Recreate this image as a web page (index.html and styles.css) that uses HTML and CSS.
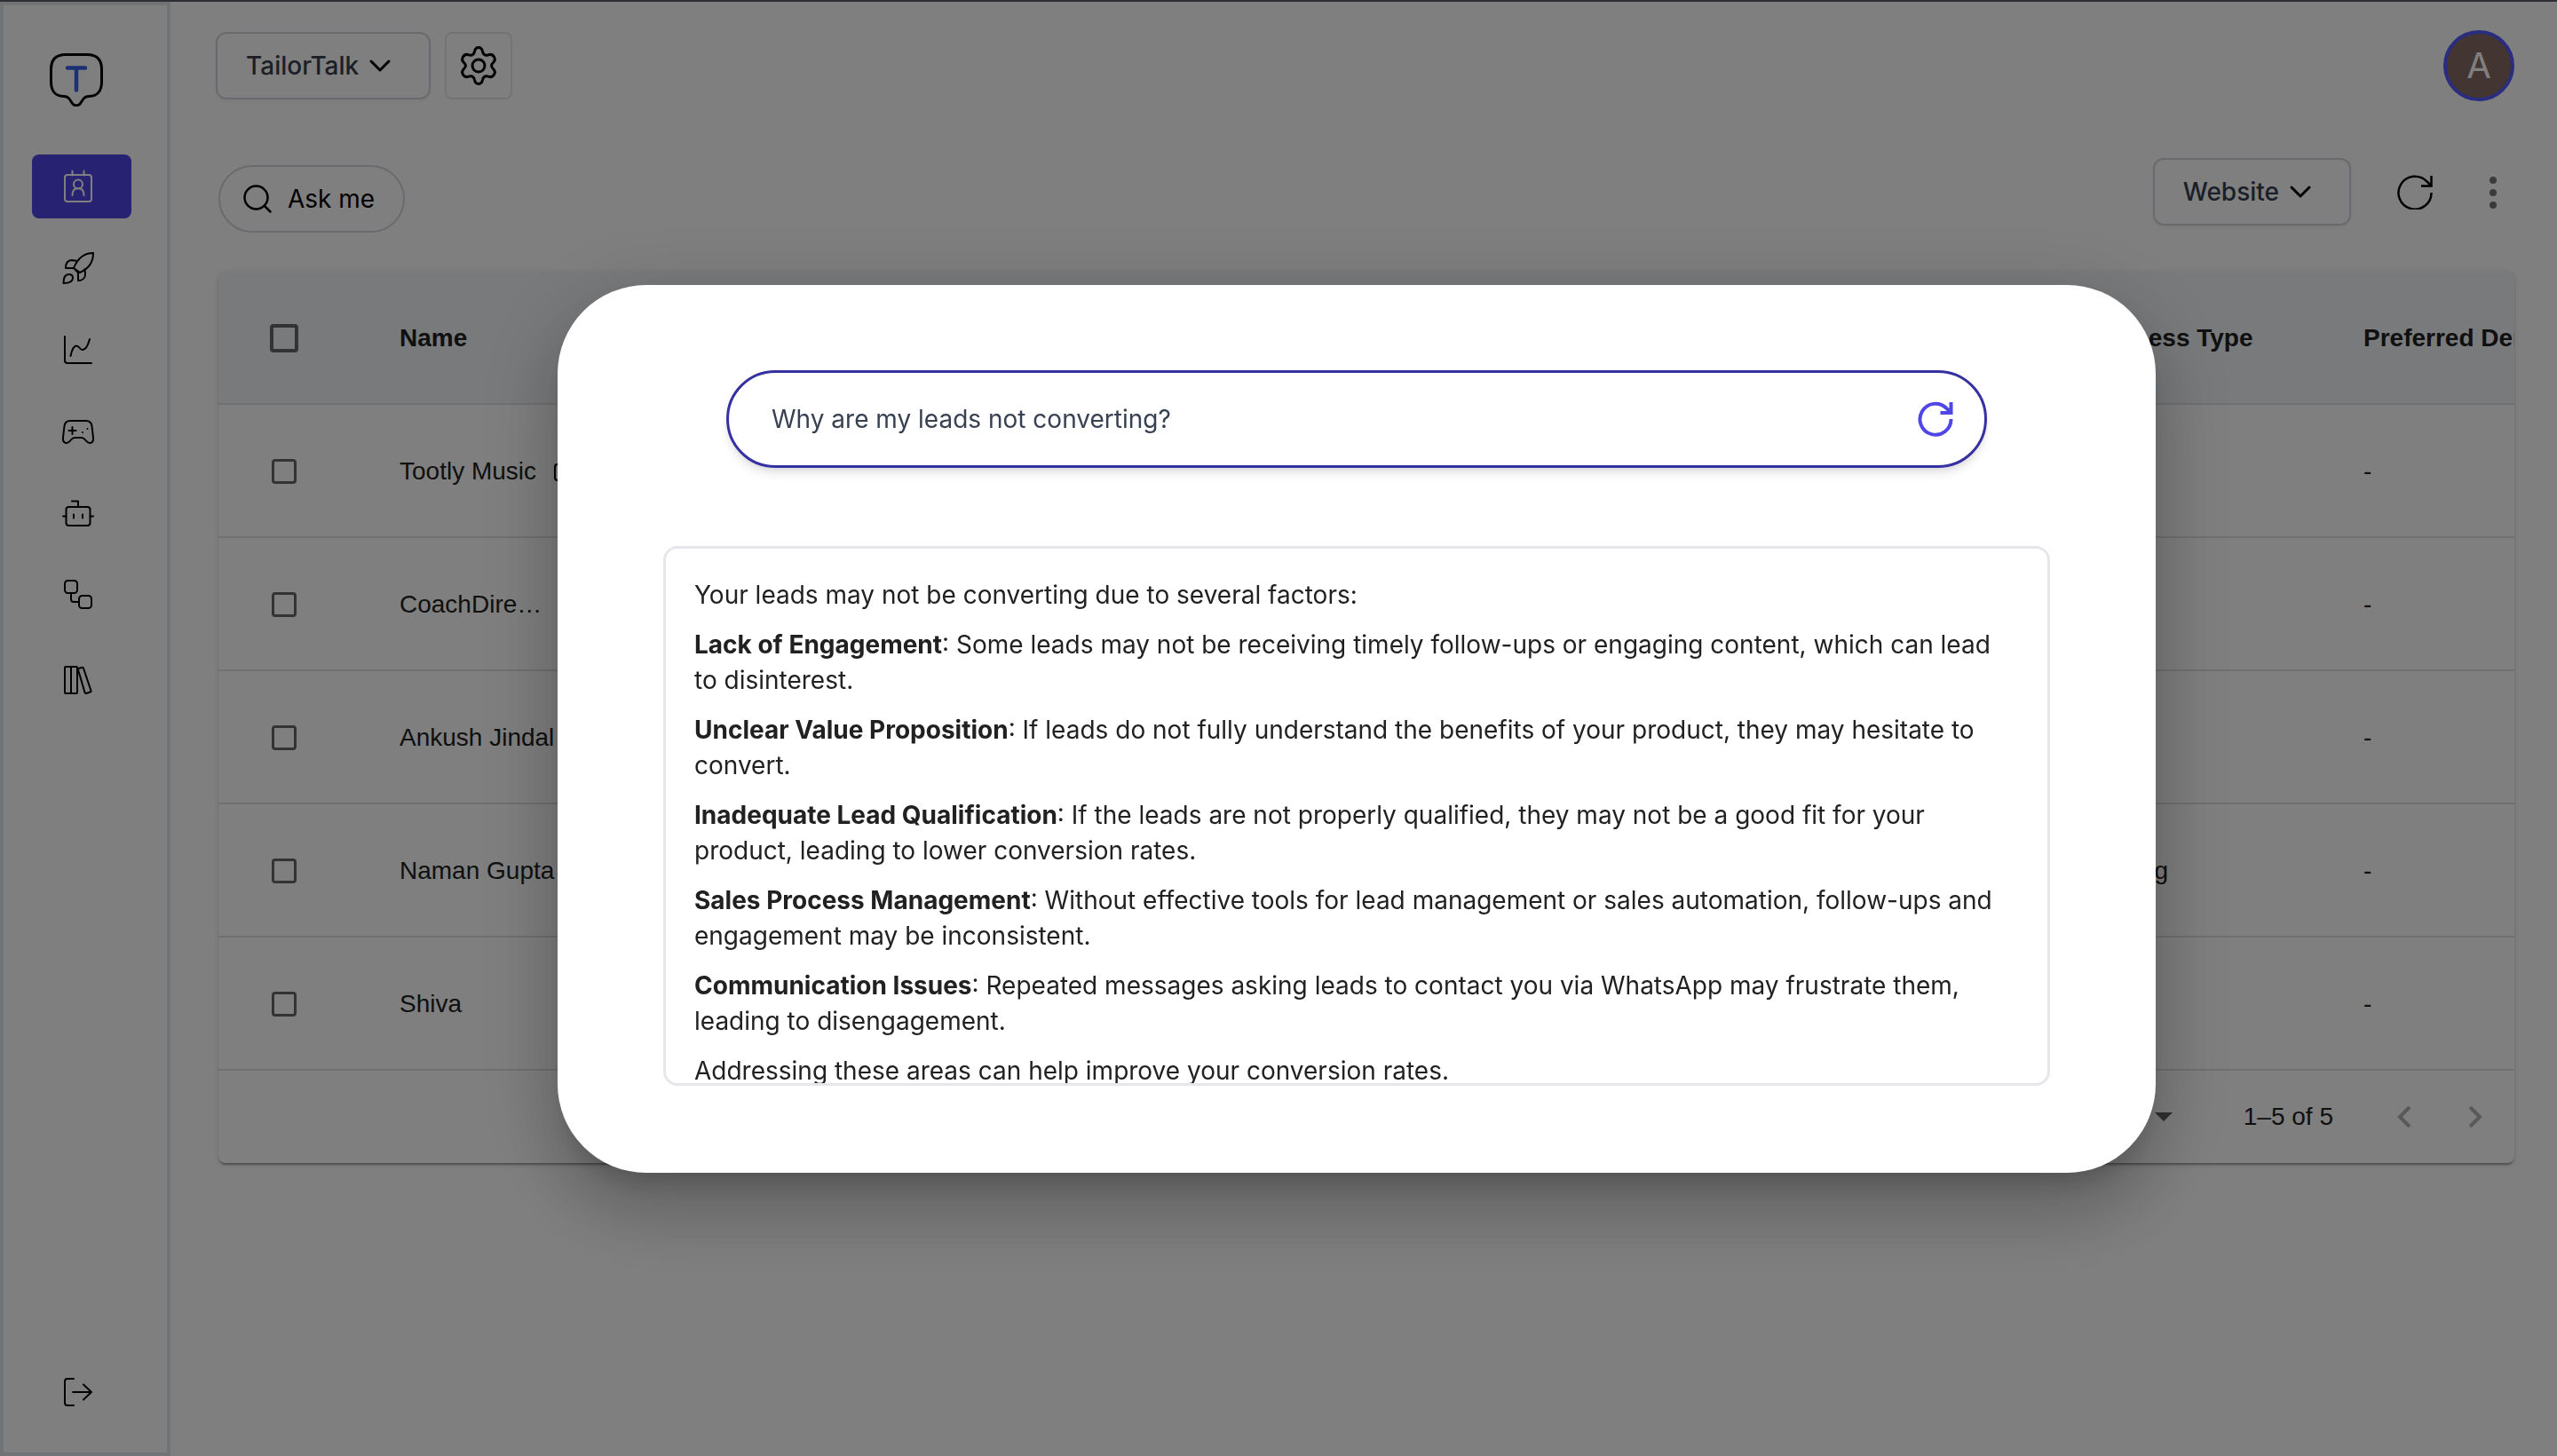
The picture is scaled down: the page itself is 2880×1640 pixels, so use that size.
FILE: index.html
```html
<!DOCTYPE html>
<html lang="en">
<head>
<meta charset="utf-8">
<title>TailorTalk</title>
<link rel="stylesheet" href="styles.css">
</head>
<body>
<div class="app">
  <aside class="sidebar">
    <a class="logo" href="#" aria-label="TailorTalk">
      <svg width="60" height="60" viewBox="0 0 60 60" fill="none" stroke-linecap="round" stroke-linejoin="round"><path d="M18 1.5h24c11 0 16.500 5.500 16.500 16.500v14c0 11-5.500 16.500-14 16.500c-4 0-5.500 1-7 3.500l-3 4.500c-2 3-7 3-9 0l-3-4.500c-1.500-2.500-3-3.500-7-3.500C7 48.500 1.500 43 1.500 32V18C1.500 7 7 1.500 18 1.500z" stroke="#000" stroke-width="3"/><path d="M20 16.500h20M30 16.500v25" stroke="#3563e9" stroke-width="4.500"/></svg>
    </a>
    <nav class="nav">
      <a class="nav-item active" href="#" aria-label="Leads"><svg class="icon" viewBox="0 0 40 40"><rect x="5" y="7" width="30" height="30" rx="3"/><path d="M13.500 2.500v5M26.500 2.500v5M13.500 30c0-5 2.500-8 6.500-8s6.500 3 6.500 8"/><circle cx="20" cy="17.500" r="5"/></svg></a>
      <a class="nav-item" href="#" aria-label="Campaigns"><svg class="icon" viewBox="0 0 40 40"><path d="M15 20C19 10 25 3 37 3c0 11-6 18-15 22zM15 20l5 5M15 20H6c0-5 2-9 7-9l6 1M20 25v9c5 0 8-3 8-7l-.500-6M3.500 37c0-6 2-10 6-10c3 0 4.500 1.500 4.500 4c0 4-4.500 6-10.500 6z"/></svg></a>
      <a class="nav-item" href="#" aria-label="Analytics"><svg class="icon" viewBox="0 0 40 40"><path d="M5 5v27c0 2 1 3 3 3h27M11.500 27C13 20 15 15.500 18 15.500c3.500 0 3.500 4.500 7 4.500c4 0 6-4.500 8-12"/></svg></a>
      <a class="nav-item" href="#" aria-label="Playground"><svg class="icon" viewBox="0 0 40 40"><path d="M11 8h18c4 0 6 2 6.500 6L37 27c.500 7-5 7.500-8 3.500C27.500 28.500 26.500 27 24 27h-8c-2.500 0-3.500 1.500-5 3.500C8 34.500 2.500 34 3 27l1.500-13C5 10 7 8 11 8zM13.500 15v8M9.500 19h8M25 21v.010M30.500 17v.010"/></svg></a>
      <a class="nav-item" href="#" aria-label="Agents"><svg class="icon" viewBox="0 0 40 40"><rect x="6.500" y="13" width="27" height="21" rx="3"/><path d="M13 6.500h7V13M3 23.500h3.500M33.500 23.500H37M15 21.500v4M25 21.500v4"/></svg></a>
      <a class="nav-item" href="#" aria-label="Workflows"><svg class="icon" viewBox="0 0 40 40"><rect x="5" y="4" width="14" height="14" rx="3.500"/><rect x="21" y="21" width="14" height="14" rx="3.500"/><path d="M12 18v7c0 2 1 3 3 3h6"/></svg></a>
      <a class="nav-item library" href="#" aria-label="Library"><svg class="icon" viewBox="0 0 40 40"><rect x="5" y="5" width="7" height="30" rx="1"/><rect x="12" y="5" width="7" height="30" rx="1"/><path d="M20.500 7l4-1.200q1.200-.300 1.500.900l8.500 25.300q.300 1.200-.900 1.500l-4.500 1.500q-1.200.300-1.500-.900L20 8.500q-.300-1.200.500-1.500z"/></svg></a>
    </nav>
    <button class="nav-item logout" type="button" aria-label="Log out"><svg class="icon" viewBox="0 0 40 40"><path d="M15 5H8Q5 5 5 8v24q0 3 3 3h7M14 20h21M26 11.500l9 8.500l-9 8.500"/></svg></button>
  </aside>

  <main class="main">
    <header class="topbar">
      <button class="select-btn" type="button">TailorTalk <svg class="chevron" viewBox="0 0 24 16"><path d="M2 3l10 10L22 3"/></svg></button>
      <button class="gear-btn" type="button" aria-label="Settings"><svg width="48" height="48" viewBox="0 0 48 48" fill="none" stroke="#000" stroke-width="3"><circle cx="24" cy="24" r="7"/><path d="M24 3.500c3 0 4 2 4.500 4.500c.500 3.500 3 5 6.500 3.800c3-1 5-.300 6.500 2.200s1 4.500-1 6.500c-2.500 2.300-2.500 4.700 0 7c2 2 2.500 4 1 6.500s-3.500 3.200-6.500 2.200c-3.500-1.200-6 .300-6.500 3.800c-.500 2.500-1.500 4.500-4.500 4.500s-4-2-4.500-4.500c-.500-3.500-3-5-6.500-3.800c-3 1-5 .300-6.500-2.200s-1-4.500 1-6.500c2.500-2.300 2.500-4.700 0-7c-2-2-2.500-4-1-6.500s3.500-3.200 6.500-2.200c3.500 1.200 6-.300 6.500-3.800C20 5.500 21 3.500 24 3.500z"/></svg></button>
      <span class="avatar">A</span>
    </header>

    <div class="toolbar">
      <button class="ask-btn" type="button"><svg width="32" height="32" viewBox="0 0 32 32" fill="none" stroke="#000" stroke-width="2.500" stroke-linecap="round"><circle cx="14.500" cy="14.500" r="13"/><path d="M24 24l6.500 6.500"/></svg>Ask me</button>
      <div class="tools">
        <button class="select-btn" type="button">Website <svg class="chevron" viewBox="0 0 24 16"><path d="M2 3l10 10L22 3"/></svg></button>
        <button class="icon-btn" type="button" aria-label="Refresh"><svg width="40" height="40" viewBox="0 0 40 40" fill="none" stroke="#000" stroke-width="2.500"><path d="M38.500 21A18.500 18.500 0 1 1 33.500 8.500l5 5M38.500 2v11.500H27"/></svg></button>
        <button class="icon-btn dots" type="button" aria-label="More"><svg width="8" height="38" viewBox="0 0 8 38"><circle cx="4" cy="6" r="4"/><circle cx="4" cy="20" r="4"/><circle cx="4" cy="34" r="4"/></svg></button>
      </div>
    </div>

    <section class="card">
      <table class="leads">
        <colgroup><col class="c-check"><col class="c-name"><col class="c-mid"><col class="c-type"><col class="c-date"></colgroup>
        <thead>
          <tr><th><input type="checkbox" aria-label="Select all"></th><th>Name</th><th></th><th>Business Type</th><th>Preferred Demo</th></tr>
        </thead>
        <tbody>
          <tr><td><input type="checkbox" aria-label="Select Tootly Music"></td><td><span class="name">Tootly Music <svg width="24" height="24" viewBox="0 0 24 24" fill="none" stroke="#000" stroke-width="2"><rect x="1" y="4" width="18" height="18" rx="3"/></svg></span></td><td></td><td>-</td><td>-</td></tr>
          <tr><td><input type="checkbox" aria-label="Select CoachDire…"></td><td>CoachDire…</td><td></td><td>-</td><td>-</td></tr>
          <tr><td><input type="checkbox" aria-label="Select Ankush Jindal"></td><td>Ankush Jindal</td><td></td><td>-</td><td>-</td></tr>
          <tr><td><input type="checkbox" aria-label="Select Naman Gupta"></td><td>Naman Gupta</td><td></td><td>Training</td><td>-</td></tr>
          <tr><td><input type="checkbox" aria-label="Select Shiva"></td><td>Shiva</td><td></td><td>-</td><td>-</td></tr>
        </tbody>
      </table>
      <footer class="pager">
        <svg class="caret" width="20" height="10" viewBox="0 0 20 10"><path d="M0 0h20L10 10z"/></svg>
        <span>1–5 of 5</span>
        <span class="pager-nav">
          <button class="page-btn" type="button" aria-label="Previous page"><svg width="16" height="24" viewBox="0 0 16 24"><path d="M14 1L3 12l11 11"/></svg></button>
          <button class="page-btn" type="button" aria-label="Next page"><svg width="16" height="24" viewBox="0 0 16 24"><path d="M2 1l11 11L2 23"/></svg></button>
        </span>
      </footer>
    </section>
  </main>
</div>

<div class="overlay">
  <div class="modal" role="dialog" aria-modal="true" aria-label="Ask me">
    <form class="ask">
      <input class="ask-input" type="text" aria-label="Question" value="Why are my leads not converting?">
      <button class="icon-btn" type="button" aria-label="Ask again"><svg width="40" height="40" viewBox="0 0 40 40" fill="none" stroke="#4f46e5" stroke-width="4"><path d="M37.500 20A17.500 17.500 0 1 1 32.500 8l5 4.500M37.500 1v12H25.500"/></svg></button>
    </form>
    <div class="answer">
      <p>Your leads may not be converting due to several factors:</p>
      <p><strong>Lack of Engagement</strong>: Some leads may not be receiving timely follow-ups or engaging content, which can lead to disinterest.</p>
      <p><strong>Unclear Value Proposition</strong>: If leads do not fully understand the benefits of your product, they may hesitate to convert.</p>
      <p><strong>Inadequate Lead Qualification</strong>: If the leads are not properly qualified, they may not be a good fit for your product, leading to lower conversion rates.</p>
      <p><strong>Sales Process Management</strong>: Without effective tools for lead management or sales automation, follow-ups and engagement may be inconsistent.</p>
      <p><strong>Communication Issues</strong>: Repeated messages asking leads to contact you via WhatsApp may frustrate them, leading to disengagement.</p>
      <p>Addressing these areas can help improve your conversion rates.</p>
    </div>
  </div>
</div>
</body>
</html>
```
FILE: styles.css
```css
* { box-sizing: border-box; }
body {
  margin: 0;
  border-top: 2px solid #5e5e66;
  background: #fff;
  color: #212121;
  font: 28px/40px Inter, sans-serif;
  overflow: hidden;
}
button, input { font: inherit; color: inherit; margin: 0; }
button { background: none; border: 0; padding: 0; }
svg { display: block; flex: none; }

.app { display: flex; min-height: calc(100vh - 2px); }

/* Sidebar */
.sidebar {
  flex: none;
  display: flex;
  flex-direction: column;
  width: 192px;
  padding: 54px 0 32px 32px;
  border: 4px solid #e5e7eb;
}
.logo { margin-left: 20px; }
.nav { display: flex; flex-direction: column; gap: 20px; margin-top: 54px; }
.nav-item {
  display: flex;
  align-items: center;
  justify-content: center;
  width: 112px;
  height: 72px;
  padding-right: 8px;
  border-radius: 8px;
}
.nav-item.active { background: #4f46e5; }
.nav-item.library { margin-top: 4px; }
.logout { margin-top: auto; }
.icon {
  width: 40px;
  height: 40px;
  fill: none;
  stroke: #000;
  stroke-width: 2;
  stroke-linecap: round;
  stroke-linejoin: round;
}
.active .icon { stroke: #fff; }

/* Main column */
.main { flex: 1; min-width: 0; padding: 32px 48px 0 51px; }
.topbar { display: flex; align-items: center; gap: 16px; height: 80px; }
.select-btn {
  display: flex;
  align-items: center;
  gap: 12px;
  height: 76px;
  padding: 0 43px 0 32px;
  border: 2px solid #d1d5db;
  border-radius: 12px;
  box-shadow: 0 2px 4px rgba(0, 0, 0, .05);
  color: #374151;
  font-weight: 500;
}
.chevron { width: 24px; height: 16px; fill: none; stroke: #000; stroke-width: 3; stroke-linecap: round; stroke-linejoin: round; }
.gear-btn {
  display: flex;
  align-items: center;
  justify-content: center;
  width: 76px;
  height: 76px;
  border: 2px solid #e5e7eb;
  border-radius: 8px;
}
.avatar {
  width: 80px;
  height: 80px;
  margin-left: auto;
  border: 4px solid #5558ff;
  border-radius: 50%;
  background: #876b62;
  color: #fff;
  font-size: 40px;
  line-height: 72px;
  text-align: center;
}
.toolbar { display: flex; justify-content: space-between; align-items: flex-end; height: 148px; }
.ask-btn {
  display: flex;
  align-items: center;
  gap: 18px;
  height: 76px;
  margin-left: 3px;
  padding: 0 32px 0 26px;
  border: 2px solid #d1d5db;
  border-radius: 38px;
  color: #000;
}
.tools { display: flex; align-items: center; margin-bottom: 8px; }
.tools .icon-btn { margin-left: 52px; }
.tools .dots { margin: 0 20px 0 64px; fill: #757575; }

/* Leads table */
.card {
  margin: 43px 0 0 3px;
  border-radius: 8px;
  overflow: hidden;
  box-shadow: 0 4px 2px -2px rgba(0, 0, 0, .2), 0 2px 2px rgba(0, 0, 0, .14), 0 2px 6px rgba(0, 0, 0, .12);
  color: #212121;
  font-family: "Liberation Sans", Arial, sans-serif;
}
.leads { width: 100%; border-collapse: separate; border-spacing: 0; table-layout: fixed; }
.c-check { width: 172px; }
.c-name { width: 260px; }
.c-type { width: 320px; }
.c-date { width: 202px; }
th, td {
  height: 150px;
  padding: 2px 0 0 32px;
  border-bottom: 2px solid #e0e0e0;
  text-align: left;
  white-space: nowrap;
}
th { height: 151px; background: #f3f5f8; }
th:first-child, td:first-child { padding-left: 60px; }
input[type="checkbox"] {
  appearance: none;
  display: block;
  width: 28px;
  height: 28px;
  border: 3px solid #666;
  border-radius: 4px;
}
th input[type="checkbox"] { width: 32px; height: 32px; margin-left: -2px; border-width: 4px; }
.name { display: flex; align-items: center; gap: 20px; }
.pager { display: flex; align-items: center; justify-content: flex-end; height: 104px; padding-right: 36px; }
.pager .caret { margin-right: 80px; fill: #616161; }
.pager-nav { display: flex; gap: 64px; margin-left: 72px; }
.page-btn svg { fill: none; stroke: #b3b3b3; stroke-width: 4; }

/* Dialog */
.overlay {
  position: fixed;
  inset: 0;
  display: flex;
  align-items: center;
  justify-content: center;
  padding: 2px 0 0 176px;
  background: rgba(0, 0, 0, .5);
}
.modal {
  width: 1800px;
  max-width: 92%;
  padding: 96px 119px 98px;
  border-radius: 100px;
  background: #fff;
  box-shadow: 0 22px 30px -14px rgba(0, 0, 0, .2), 0 48px 76px 6px rgba(0, 0, 0, .14), 0 18px 92px 16px rgba(0, 0, 0, .12);
}
.ask {
  display: flex;
  align-items: center;
  height: 110px;
  margin: 0 71px 88px;
  padding: 0 35px 0 48px;
  border: 3px solid #3730a3;
  border-radius: 55px;
  box-shadow: 0 8px 12px -2px rgba(0, 0, 0, .1), 0 4px 8px -4px rgba(0, 0, 0, .1);
}
.ask-input { flex: 1; min-width: 0; padding: 0; border: 0; outline: 0; background: none; color: #374151; }
.answer {
  height: 608px;
  padding: 32px;
  border: 3px solid #e5e7eb;
  border-radius: 16px;
  overflow: hidden;
}
.answer p { margin: 0 0 16px; }
```
